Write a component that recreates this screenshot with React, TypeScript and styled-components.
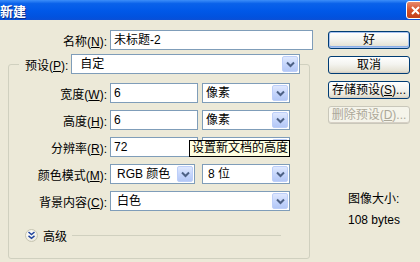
import React from 'react';
import styled, { createGlobalStyle } from 'styled-components';

const GlobalStyle = createGlobalStyle`
  html, body {
    margin: 0;
    padding: 0;
    background: #ece9d8;
  }
  body {
    font-family: Tahoma, "Liberation Sans", "Noto Sans CJK SC", sans-serif;
    font-size: 12px;
    color: #000;
  }
`;

const Window = styled.div`
  width: 420px;
  height: 262px;
  overflow: hidden;
  background: #ece9d8;
  display: flex;
  flex-direction: column;
`;

const TitleBar = styled.div`
  height: 20px;
  flex: none;
  display: flex;
  align-items: center;
  justify-content: space-between;
  background: linear-gradient(#3c8ef9 0%, #0a62ea 18%, #0058e8 55%, #0152df 85%, #0a4fd6 100%);
  color: #fff;
  font-weight: bold;
  font-size: 13px;
  text-shadow: 1px 1px 0 #0a2f8a;
`;

const Title = styled.span`
  margin-left: 0;
`;

const CloseBtn = styled.div`
  width: 19px;
  height: 18px;
  margin-right: -5px;
  box-sizing: border-box;
  border: 1px solid #fff;
  border-radius: 3px;
  background: linear-gradient(#e8896b, #d5522c 50%, #c2401a);
  display: flex;
  align-items: center;
  justify-content: center;
`;

const Body = styled.div`
  flex: 1;
  display: flex;
`;

const LeftCol = styled.div`
  width: 318px;
  flex: none;
  padding-top: 10px;
  box-sizing: border-box;
  display: flex;
  flex-direction: column;
`;

const Row = styled.div`
  display: flex;
  align-items: center;
  height: 20px;
  position: relative;
`;

const Label = styled.span<{ $w?: number }>`
  width: ${(p) => (p.$w ? `${p.$w}px` : 'auto')};
  text-align: right;
  margin-right: 3px;
  white-space: nowrap;
`;

const TextBox = styled.div<{ $w: number; $pad?: number }>`
  width: ${(p) => p.$w}px;
  height: 20px;
  box-sizing: border-box;
  border: 1px solid #7f9db9;
  background: #fff;
  padding-left: ${(p) => p.$pad ?? 3}px;
  line-height: 18px;
  white-space: nowrap;
  overflow: hidden;
`;

const SelectBox = styled.div<{ $w: number; $pad?: number; $gap?: number }>`
  width: ${(p) => p.$w}px;
  margin-left: ${(p) => p.$gap ?? 0}px;
  height: 20px;
  box-sizing: border-box;
  border: 1px solid #7f9db9;
  background: #fff;
  display: flex;
  align-items: center;
  padding: 1px 1px 1px ${(p) => p.$pad ?? 4}px;
`;

const SelectValue = styled.span`
  flex: 1;
  white-space: nowrap;
  overflow: hidden;
  line-height: 16px;
`;

const ArrowBtn = styled.div`
  width: 16px;
  height: 16px;
  box-sizing: border-box;
  border-radius: 2px;
  border: 1px solid #bdcff9;
  background: linear-gradient(#dfe8fe, #c2d3fb 60%, #b4c8f6);
  display: flex;
  align-items: center;
  justify-content: center;
`;

const GroupBox = styled.fieldset`
  margin: 4px 8px 0 8px;
  padding: 0 0 15px 0;
  border: 1px solid #d0d0bf;
  border-radius: 3px;
  min-width: 0;
`;

const Legend = styled.legend`
  margin-left: 10px;
  padding: 0 0 0 6px;
`;

const LegendInner = styled.div`
  display: flex;
  align-items: center;
  height: 20px;
`;

const Rows = styled.div`
  display: flex;
  flex-direction: column;
  gap: 7px;
  padding-top: 9px;
`;

const Tooltip = styled.div`
  position: absolute;
  left: 180px;
  top: 3px;
  height: 17px;
  box-sizing: border-box;
  padding: 0 1px 0 2px;
  border: 1px solid #000;
  background: #ffffe1;
  line-height: 15px;
  white-space: nowrap;
`;

const AdvancedRow = styled.div`
  display: flex;
  align-items: center;
  margin-top: 16px;
  padding-left: 16px;
  padding-right: 28px;
  height: 16px;
`;

const RoundBtn = styled.div`
  width: 13px;
  height: 13px;
  box-sizing: border-box;
  border-radius: 50%;
  border: 1px solid #c7c5b2;
  background: radial-gradient(circle at 40% 35%, #fff, #f1efe6 60%, #dcd9c8);
  margin-right: 5px;
  display: flex;
  align-items: center;
  justify-content: center;
`;

const Divider = styled.div`
  flex: 1;
  height: 1px;
  background: #d0d0bf;
  margin-left: 5px;
`;

const RightCol = styled.div`
  flex: 1;
  padding: 11px 0 0 10px;
  display: flex;
  flex-direction: column;
  gap: 7px;
`;

const Button = styled.div<{ $default?: boolean; $disabled?: boolean }>`
  width: 82px;
  height: 18px;
  box-sizing: border-box;
  border: 1px solid ${(p) => (p.$disabled ? '#c9c7ba' : '#003c74')};
  border-radius: 3px;
  background: ${(p) =>
    p.$disabled ? '#f5f4ea' : 'linear-gradient(#ffffff, #f4f4f0 45%, #e6e3d6 85%, #d6d0c5)'};
  color: ${(p) => (p.$disabled ? '#aca899' : '#000')};
  box-shadow: ${(p) =>
    p.$default ? 'inset 0 0 0 1px #a9c3f0, inset 0 -1px 0 1px #8aaee8' : 'inset 0 -1px 0 #d6d0c5'};
  display: flex;
  align-items: center;
  justify-content: center;
  line-height: 16px;
  white-space: nowrap;
`;

const Info = styled.div`
  margin-top: 60px;
  padding-left: 20px;
  display: flex;
  flex-direction: column;
  gap: 5px;
  line-height: 16px;
`;

const Chevron = () => (
  <svg width="9" height="7" viewBox="0 0 9 7">
    <path d="M1 1.5 L4.5 5 L8 1.5" fill="none" stroke="#4d6185" strokeWidth="2" />
  </svg>
);

const DoubleChevron = () => (
  <svg width="9" height="9" viewBox="0 0 9 9">
    <path d="M1.5 1 L4.5 3.5 L7.5 1 M1.5 4.8 L4.5 7.3 L7.5 4.8" fill="none" stroke="#21439c" strokeWidth="1.5" />
  </svg>
);

function Select({ value, w, pad, gap }: { value: string; w: number; pad?: number; gap?: number }) {
  return (
    <SelectBox $w={w} $pad={pad} $gap={gap}>
      <SelectValue>{value}</SelectValue>
      <ArrowBtn>
        <Chevron />
      </ArrowBtn>
    </SelectBox>
  );
}

export default function App() {
  return (
    <Window>
      <GlobalStyle />
      <TitleBar>
        <Title>新建</Title>
        <CloseBtn>
          <svg width="9" height="9" viewBox="0 0 9 9">
            <path d="M1 1 L8 8 M8 1 L1 8" stroke="#fff" strokeWidth="2" />
          </svg>
        </CloseBtn>
      </TitleBar>
      <Body>
        <LeftCol>
          <Row>
            <Label $w={107}>
              名称(<u>N</u>):
            </Label>
            <TextBox $w={203}>未标题-2</TextBox>
          </Row>
          <GroupBox>
            <Legend>
              <LegendInner>
                <Label>
                  预设(<u>P</u>):
                </Label>
                <Select value="自定" w={229} pad={8} />
              </LegendInner>
            </Legend>
            <Rows>
              <Row>
                <Label $w={98}>
                  宽度(<u>W</u>):
                </Label>
                <TextBox $w={88}>6</TextBox>
                <Select value="像素" w={88} gap={4} pad={3} />
              </Row>
              <Row>
                <Label $w={98}>
                  高度(<u>H</u>):
                </Label>
                <TextBox $w={88}>6</TextBox>
                <Select value="像素" w={88} gap={4} pad={3} />
              </Row>
              <Row>
                <Label $w={98}>
                  分辨率(<u>R</u>):
                </Label>
                <TextBox $w={88}>72</TextBox>
                {/* unit select sits hidden under the tooltip */}
                <Select value="" w={88} gap={4} pad={3} />
                <Tooltip>设置新文档的高度</Tooltip>
              </Row>
              <Row>
                <Label $w={98}>
                  颜色模式(<u>M</u>):
                </Label>
                <Select value="RGB 颜色" w={85} pad={6} />
                <Select value="8 位" w={88} gap={7} pad={5} />
              </Row>
              <Row>
                <Label $w={98}>
                  背景内容(<u>C</u>):
                </Label>
                <Select value="白色" w={180} pad={6} />
              </Row>
            </Rows>
            <AdvancedRow>
              <RoundBtn>
                <DoubleChevron />
              </RoundBtn>
              <span>高级</span>
              <Divider />
            </AdvancedRow>
          </GroupBox>
        </LeftCol>
        <RightCol>
          <Button $default>好</Button>
          <Button>取消</Button>
          <Button>
            存储预设(<u>S</u>)...
          </Button>
          <Button $disabled>
            删除预设(<u>D</u>)...
          </Button>
          <Info>
            <span>图像大小:</span>
            <span>108 bytes</span>
          </Info>
        </RightCol>
      </Body>
    </Window>
  );
}
